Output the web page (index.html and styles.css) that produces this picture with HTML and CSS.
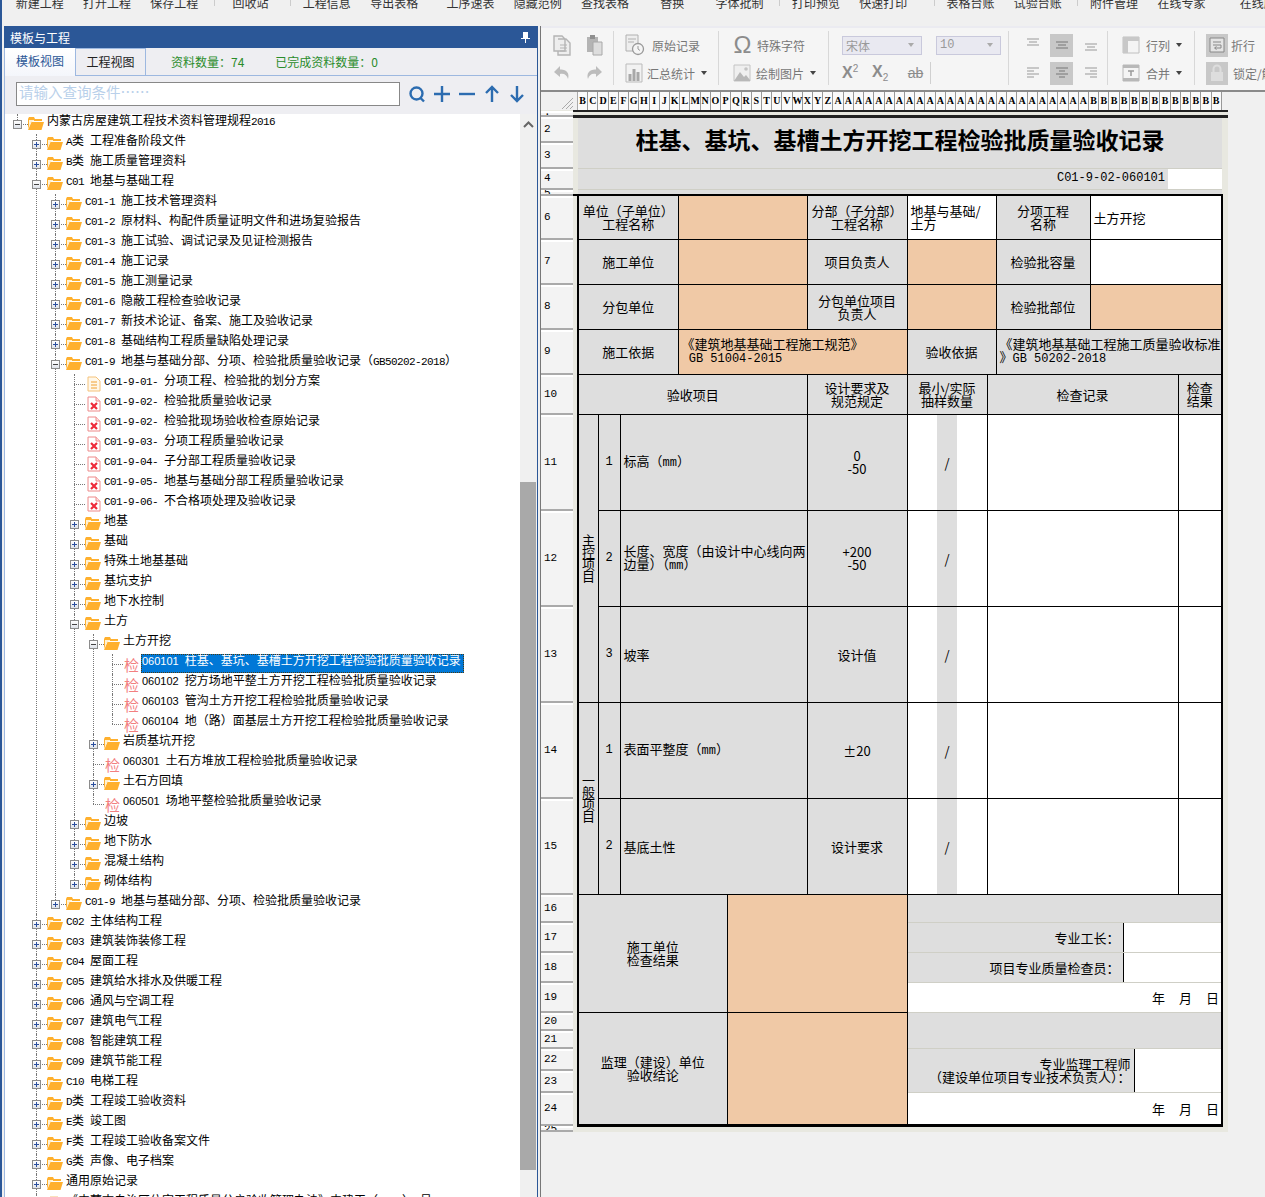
FILE: index.html
```html
<!DOCTYPE html>
<html lang="zh-CN">
<head>
  <meta charset="UTF-8" />
  <title>检验批质量验收记录</title>
  <link rel="stylesheet" href="styles.css">
</head>
<body>
  <svg class="defs" width="0" height="0">
    <symbol id="folder" viewBox="0 0 16 13">
      <path d="M0 2 L1 0 H6 L7 2 H14 V4 H4 L2 6 L0 12 Z" fill="#ffb02e"/>
      <path d="M1 3 H6 V4 L3 5 L1 9 Z" fill="#fff3d6"/>
      <path d="M3.5 5 H16 L13.5 13 H0 Z" fill="#ffb02e"/>
    </symbol>
    <symbol id="note" viewBox="0 0 14 16">
      <path d="M1 1 H9 L13 5 V15 H1 Z" fill="#fff8ea" stroke="#f5c27a"/>
      <path d="M4 6 H10 M4 9 H10 M4 12 H10" stroke="#f0a030"/>
    </symbol>
    <symbol id="pdf" viewBox="0 0 14 16">
      <path d="M1 1 H9 L13 5 V15 H1 Z" fill="#fff" stroke="#ee8a8a"/>
      <path d="M9 1 V5 H13" fill="#fdd" stroke="#ee8a8a"/>
      <path d="M4 7 L10 13 M10 7 L4 13" stroke="#ee2a3a" stroke-width="2.2"/>
    </symbol>
    <symbol id="lines-top" viewBox="0 0 16 16"><path d="M2 2 H14 M4 5 H12 M2 8 H14" stroke="#999"/></symbol>
    <symbol id="lines-mid" viewBox="0 0 16 16"><path d="M2 5 H14 M4 8 H12 M2 11 H14" stroke="#777"/></symbol>
    <symbol id="lines-bot" viewBox="0 0 16 16"><path d="M2 7 H14 M4 10 H12 M2 13 H14" stroke="#999"/></symbol>
    <symbol id="lines-left" viewBox="0 0 16 16"><path d="M2 3 H14 M2 6 H9 M2 9 H14 M2 12 H9" stroke="#999"/></symbol>
    <symbol id="lines-center" viewBox="0 0 16 16"><path d="M2 3 H14 M5 6 H11 M2 9 H14 M5 12 H11" stroke="#777"/></symbol>
    <symbol id="lines-right" viewBox="0 0 16 16"><path d="M2 3 H14 M7 6 H14 M2 9 H14 M7 12 H14" stroke="#999"/></symbol>
  </svg>

  <div class="topbar">
    <span class="tool">新建工程</span>
    <span class="tool">打开工程</span>
    <span class="tool">保存工程</span>
    <i class="tsep"></i>
    <span class="tool">回收站</span>
    <i class="tsep"></i>
    <span class="tool">工程信息</span>
    <span class="tool">导出表格</span>
    <span class="tool gap">工序速表</span>
    <span class="tool">隐藏范例</span>
    <span class="tool">查找表格</span>
    <span class="tool">替换</span>
    <span class="tool">字体批制</span>
    <i class="tsep"></i>
    <span class="tool">打印预览</span>
    <span class="tool">快速打印</span>
    <i class="tsep far"></i>
    <span class="tool">表格台账</span>
    <span class="tool">试验台账</span>
    <i class="tsep"></i>
    <span class="tool">附件管理</span>
    <span class="tool">在线专家</span>
    <span class="tool gap2">在线服务</span>
  </div>

  <div class="app">
    <!-- left: template tree -->
    <div class="panel">
      <div class="panel-title">
        <span>模板与工程</span>
        <svg class="pin" width="9" height="11" viewBox="0 0 9 11"><path d="M2 0 H7 V6 H9 V7 H5 V11 H4 V7 H0 V6 H2 Z" fill="#fff"/></svg>
      </div>
      <div class="tabs">
        <span class="tab active">模板视图</span>
        <span class="tab">工程视图</span>
        <span class="count first">资料数量：74</span>
        <span class="count">已完成资料数量：0</span>
      </div>
      <div class="search">
        <div class="search-input">请输入查询条件……</div>
        <svg class="s-icon" width="18" height="18" viewBox="0 0 18 18"><circle cx="8.5" cy="8.5" r="6" fill="none" stroke="#2c6cb0" stroke-width="2.4"/><path d="M12.5 13 L16 16.5" stroke="#2c6cb0" stroke-width="2.4"/></svg>
        <svg class="s-icon" width="18" height="18" viewBox="0 0 18 18"><path d="M1 9 H17 M9 1 V17" stroke="#2c6cb0" stroke-width="2.4"/></svg>
        <svg class="s-icon" width="18" height="18" viewBox="0 0 18 18"><path d="M1 9 H17" stroke="#2c6cb0" stroke-width="2.4"/></svg>
        <svg class="s-icon" width="18" height="18" viewBox="0 0 18 18"><path d="M9 17 V2 M3 8 L9 2 L15 8" fill="none" stroke="#2c6cb0" stroke-width="2.4"/></svg>
        <svg class="s-icon" width="18" height="18" viewBox="0 0 18 18"><path d="M9 1 V16 M3 10 L9 16 L15 10" fill="none" stroke="#2c6cb0" stroke-width="2.4"/></svg>
      </div>
      <div class="tree-wrap">
        <div class="tree">
          <ul>
            <li><div class="row"><i class="x m"></i><svg class="ico"><use href="#folder"/></svg><span class="lbl">内蒙古房屋建筑工程技术资料管理规程<span class="c">2016</span></span></div>
              <ul>
                <li><div class="row"><i class="x"></i><svg class="ico"><use href="#folder"/></svg><span class="lbl"><span class="c">A</span>类<span class="c"> </span>工程准备阶段文件</span></div></li>
                <li><div class="row"><i class="x"></i><svg class="ico"><use href="#folder"/></svg><span class="lbl"><span class="c">B</span>类<span class="c"> </span>施工质量管理资料</span></div></li>
                <li><div class="row"><i class="x m"></i><svg class="ico"><use href="#folder"/></svg><span class="lbl"><span class="c">C01 </span>地基与基础工程</span></div>
                  <ul>
                    <li><div class="row"><i class="x"></i><svg class="ico"><use href="#folder"/></svg><span class="lbl"><span class="c">C01-1 </span>施工技术管理资料</span></div></li>
                    <li><div class="row"><i class="x"></i><svg class="ico"><use href="#folder"/></svg><span class="lbl"><span class="c">C01-2 </span>原材料、构配件质量证明文件和进场复验报告</span></div></li>
                    <li><div class="row"><i class="x"></i><svg class="ico"><use href="#folder"/></svg><span class="lbl"><span class="c">C01-3 </span>施工试验、调试记录及见证检测报告</span></div></li>
                    <li><div class="row"><i class="x"></i><svg class="ico"><use href="#folder"/></svg><span class="lbl"><span class="c">C01-4 </span>施工记录</span></div></li>
                    <li><div class="row"><i class="x"></i><svg class="ico"><use href="#folder"/></svg><span class="lbl"><span class="c">C01-5 </span>施工测量记录</span></div></li>
                    <li><div class="row"><i class="x"></i><svg class="ico"><use href="#folder"/></svg><span class="lbl"><span class="c">C01-6 </span>隐蔽工程检查验收记录</span></div></li>
                    <li><div class="row"><i class="x"></i><svg class="ico"><use href="#folder"/></svg><span class="lbl"><span class="c">C01-7 </span>新技术论证、备案、施工及验收记录</span></div></li>
                    <li><div class="row"><i class="x"></i><svg class="ico"><use href="#folder"/></svg><span class="lbl"><span class="c">C01-8 </span>基础结构工程质量缺陷处理记录</span></div></li>
                    <li><div class="row"><i class="x m"></i><svg class="ico"><use href="#folder"/></svg><span class="lbl"><span class="c">C01-9 </span>地基与基础分部、分项、检验批质量验收记录（<span class="c">GB50202-2018</span>）</span></div>
                      <ul>
                        <li><div class="row"><i class="x none"></i><svg class="ico doc"><use href="#note"/></svg><span class="lbl"><span class="c">C01-9-01- </span>分项工程、检验批的划分方案</span></div></li>
                        <li><div class="row"><i class="x none"></i><svg class="ico doc"><use href="#pdf"/></svg><span class="lbl"><span class="c">C01-9-02- </span>检验批质量验收记录</span></div></li>
                        <li><div class="row"><i class="x none"></i><svg class="ico doc"><use href="#pdf"/></svg><span class="lbl"><span class="c">C01-9-02- </span>检验批现场验收检查原始记录</span></div></li>
                        <li><div class="row"><i class="x none"></i><svg class="ico doc"><use href="#pdf"/></svg><span class="lbl"><span class="c">C01-9-03- </span>分项工程质量验收记录</span></div></li>
                        <li><div class="row"><i class="x none"></i><svg class="ico doc"><use href="#pdf"/></svg><span class="lbl"><span class="c">C01-9-04- </span>子分部工程质量验收记录</span></div></li>
                        <li><div class="row"><i class="x none"></i><svg class="ico doc"><use href="#pdf"/></svg><span class="lbl"><span class="c">C01-9-05- </span>地基与基础分部工程质量验收记录</span></div></li>
                        <li><div class="row"><i class="x none"></i><svg class="ico doc"><use href="#pdf"/></svg><span class="lbl"><span class="c">C01-9-06- </span>不合格项处理及验收记录</span></div></li>
                        <li><div class="row"><i class="x"></i><svg class="ico"><use href="#folder"/></svg><span class="lbl">地基</span></div></li>
                        <li><div class="row"><i class="x"></i><svg class="ico"><use href="#folder"/></svg><span class="lbl">基础</span></div></li>
                        <li><div class="row"><i class="x"></i><svg class="ico"><use href="#folder"/></svg><span class="lbl">特殊土地基基础</span></div></li>
                        <li><div class="row"><i class="x"></i><svg class="ico"><use href="#folder"/></svg><span class="lbl">基坑支护</span></div></li>
                        <li><div class="row"><i class="x"></i><svg class="ico"><use href="#folder"/></svg><span class="lbl">地下水控制</span></div></li>
                        <li><div class="row"><i class="x m"></i><svg class="ico"><use href="#folder"/></svg><span class="lbl">土方</span></div>
                          <ul>
                            <li><div class="row"><i class="x m"></i><svg class="ico"><use href="#folder"/></svg><span class="lbl">土方开挖</span></div>
                              <ul>
                                <li><div class="row"><i class="x none"></i><span class="jian">检</span><span class="lbl sel"><span class="n">060101</span>柱基、基坑、基槽土方开挖工程检验批质量验收记录</span></div></li>
                                <li><div class="row"><i class="x none"></i><span class="jian">检</span><span class="lbl"><span class="n">060102</span>挖方场地平整土方开挖工程检验批质量验收记录</span></div></li>
                                <li><div class="row"><i class="x none"></i><span class="jian">检</span><span class="lbl"><span class="n">060103</span>管沟土方开挖工程检验批质量验收记录</span></div></li>
                                <li><div class="row"><i class="x none"></i><span class="jian">检</span><span class="lbl"><span class="n">060104</span>地（路）面基层土方开挖工程检验批质量验收记录</span></div></li>
                              </ul>
                            </li>
                            <li><div class="row"><i class="x"></i><svg class="ico"><use href="#folder"/></svg><span class="lbl">岩质基坑开挖</span></div></li>
                            <li><div class="row"><i class="x none"></i><span class="jian">检</span><span class="lbl"><span class="n">060301</span>土石方堆放工程检验批质量验收记录</span></div></li>
                            <li><div class="row"><i class="x"></i><svg class="ico"><use href="#folder"/></svg><span class="lbl">土石方回填</span></div></li>
                            <li><div class="row"><i class="x none"></i><span class="jian">检</span><span class="lbl"><span class="n">060501</span>场地平整检验批质量验收记录</span></div></li>
                          </ul>
                        </li>
                        <li><div class="row"><i class="x"></i><svg class="ico"><use href="#folder"/></svg><span class="lbl">边坡</span></div></li>
                        <li><div class="row"><i class="x"></i><svg class="ico"><use href="#folder"/></svg><span class="lbl">地下防水</span></div></li>
                        <li><div class="row"><i class="x"></i><svg class="ico"><use href="#folder"/></svg><span class="lbl">混凝土结构</span></div></li>
                        <li><div class="row"><i class="x"></i><svg class="ico"><use href="#folder"/></svg><span class="lbl">砌体结构</span></div></li>
                      </ul>
                    </li>
                    <li><div class="row"><i class="x"></i><svg class="ico"><use href="#folder"/></svg><span class="lbl"><span class="c">C01-9 </span>地基与基础分部、分项、检验批质量验收记录</span></div></li>
                  </ul>
                </li>
                <li><div class="row"><i class="x"></i><svg class="ico"><use href="#folder"/></svg><span class="lbl"><span class="c">C02 </span>主体结构工程</span></div></li>
                <li><div class="row"><i class="x"></i><svg class="ico"><use href="#folder"/></svg><span class="lbl"><span class="c">C03 </span>建筑装饰装修工程</span></div></li>
                <li><div class="row"><i class="x"></i><svg class="ico"><use href="#folder"/></svg><span class="lbl"><span class="c">C04 </span>屋面工程</span></div></li>
                <li><div class="row"><i class="x"></i><svg class="ico"><use href="#folder"/></svg><span class="lbl"><span class="c">C05 </span>建筑给水排水及供暖工程</span></div></li>
                <li><div class="row"><i class="x"></i><svg class="ico"><use href="#folder"/></svg><span class="lbl"><span class="c">C06 </span>通风与空调工程</span></div></li>
                <li><div class="row"><i class="x"></i><svg class="ico"><use href="#folder"/></svg><span class="lbl"><span class="c">C07 </span>建筑电气工程</span></div></li>
                <li><div class="row"><i class="x"></i><svg class="ico"><use href="#folder"/></svg><span class="lbl"><span class="c">C08 </span>智能建筑工程</span></div></li>
                <li><div class="row"><i class="x"></i><svg class="ico"><use href="#folder"/></svg><span class="lbl"><span class="c">C09 </span>建筑节能工程</span></div></li>
                <li><div class="row"><i class="x"></i><svg class="ico"><use href="#folder"/></svg><span class="lbl"><span class="c">C10 </span>电梯工程</span></div></li>
                <li><div class="row"><i class="x"></i><svg class="ico"><use href="#folder"/></svg><span class="lbl"><span class="c">D</span>类<span class="c"> </span>工程竣工验收资料</span></div></li>
                <li><div class="row"><i class="x"></i><svg class="ico"><use href="#folder"/></svg><span class="lbl"><span class="c">E</span>类<span class="c"> </span>竣工图</span></div></li>
                <li><div class="row"><i class="x"></i><svg class="ico"><use href="#folder"/></svg><span class="lbl"><span class="c">F</span>类<span class="c"> </span>工程竣工验收备案文件</span></div></li>
                <li><div class="row"><i class="x"></i><svg class="ico"><use href="#folder"/></svg><span class="lbl"><span class="c">G</span>类<span class="c"> </span>声像、电子档案</span></div></li>
                <li><div class="row"><i class="x"></i><svg class="ico"><use href="#folder"/></svg><span class="lbl">通用原始记录</span></div></li>
                <li><div class="row"><i class="x none"></i><svg class="ico doc"><use href="#note"/></svg><span class="lbl">《内蒙古自治区住宅工程质量分户验收管理办法》内建工（<span class="c">2012</span>）<span class="c">1</span>号</span></div></li>
              </ul>
            </li>
          </ul>
        </div>
        <div class="scrollbar">
          <svg class="chev" width="11" height="7" viewBox="0 0 11 7"><path d="M1 6 L5.5 1.5 L10 6" fill="none" stroke="#666" stroke-width="2"/></svg>
          <div class="thumb"></div>
        </div>
      </div>
    </div>

    <!-- right: ribbon and sheet -->
    <div class="work">
      <div class="ribbon">
        <div class="grp g1">
          <div class="rrow">
            <svg width="20" height="22" viewBox="0 0 20 22"><path d="M2 2 H10 L13 5 V17 H2 Z M6 5 H14 L18 9 V21 H6 V17" fill="#eee" stroke="#b4b4b4" stroke-width="1.4"/><path d="M8 11 H15 M8 14 H15 M8 17 H15" stroke="#b4b4b4"/></svg>
            <svg width="20" height="22" viewBox="0 0 20 22"><path d="M3 3 H14 V18 H3 Z" fill="#b4b4b4"/><path d="M6 1 H11 V5 H6 Z" fill="#8f8f8f"/><path d="M9 8 H18 V21 H9 Z" fill="#ddd" stroke="#a8a8a8"/></svg>
          </div>
          <div class="rrow">
            <svg width="20" height="18" viewBox="0 0 20 18"><path d="M8 2 L2 8 L8 13 V10 C12 9 15 11 16 15 C18 9 14 5 8 5.500 Z" fill="#bcbcbc"/></svg>
            <svg width="20" height="18" viewBox="0 0 20 18"><path d="M12 2 L18 8 L12 13 V10 C8 9 5 11 4 15 C2 9 6 5 12 5.500 Z" fill="#bcbcbc"/></svg>
          </div>
        </div>
        <div class="grp g2">
          <div class="rrow">
            <svg width="20" height="22" viewBox="0 0 20 22"><path d="M1 1 H13 V17 H1 Z" fill="#eee" stroke="#b0b0b0"/><path d="M3 5 H11 M3 8 H9" stroke="#b0b0b0"/><circle cx="13" cy="15" r="5.500" fill="#f5f5f5" stroke="#999" stroke-width="1.300"/><path d="M13 12 V15 L15 16.500" fill="none" stroke="#999"/></svg>
            <span class="rtext t2a">原始记录</span>
          </div>
          <div class="rrow">
            <svg width="18" height="20" viewBox="0 0 18 20"><path d="M1 1 H17 V19 H1 Z" fill="#f2f2f2" stroke="#bbb"/><path d="M5 11 V18 M9 6 V18 M13 9 V18" stroke="#a8a8a8" stroke-width="3"/></svg>
            <span class="rtext t2b">汇总统计</span><i class="caret"></i>
          </div>
        </div>
        <div class="grp g3">
          <div class="rrow">
            <span class="omega">Ω</span>
            <span class="rtext t3a">特殊字符</span>
          </div>
          <div class="rrow">
            <svg width="18" height="18" viewBox="0 0 18 18"><path d="M1 1 H17 V17 H1 Z" fill="#efefef" stroke="#c4c4c4"/><path d="M1 17 L7 8 L11 13 L13 11 L17 16 V17 Z" fill="#b8b8b8"/><circle cx="13" cy="5" r="1.800" fill="#c4c4c4"/></svg>
            <span class="rtext t3b">绘制图片</span><i class="caret"></i>
          </div>
        </div>
        <div class="grp g4">
          <div class="rrow">
            <div class="select wide"><span>宋体</span><i class="caret lite"></i></div>
            <div class="select"><span class="num">10</span><i class="caret lite"></i></div>
          </div>
          <div class="rrow">
            <span class="script">X<sup>2</sup></span>
            <span class="script">X<sub>2</sub></span>
            <span class="strike">ab</span>
            <i class="vsep"></i>
          </div>
        </div>
        <div class="grp g5">
          <div class="rrow">
            <span class="al"><svg width="16" height="16"><use href="#lines-top"/></svg></span>
            <span class="al on"><svg width="16" height="16"><use href="#lines-mid"/></svg></span>
            <span class="al"><svg width="16" height="16"><use href="#lines-bot"/></svg></span>
          </div>
          <div class="rrow">
            <span class="al"><svg width="16" height="16"><use href="#lines-left"/></svg></span>
            <span class="al on"><svg width="16" height="16"><use href="#lines-center"/></svg></span>
            <span class="al"><svg width="16" height="16"><use href="#lines-right"/></svg></span>
          </div>
        </div>
        <div class="grp g6">
          <div class="rrow">
            <svg width="18" height="18" viewBox="0 0 18 18"><path d="M1 1 H17 V17 H1 Z" fill="#f4f4f4" stroke="#c0c0c0"/><path d="M1 1 H17 V5 H1 Z M1 5 H6 V17 H1 Z" fill="#c8c8c8"/></svg>
            <span class="rtext t6">行列</span><i class="caret"></i>
          </div>
          <div class="rrow">
            <svg width="18" height="18" viewBox="0 0 18 18"><path d="M1 1 H17 V17 H1 Z" fill="#f4f4f4" stroke="#b8b8b8"/><path d="M1 1 H17 V4 H1 Z M1 14 H17 V17 H1 Z" fill="#b8b8b8"/><path d="M6 7 H12 M9 7 V12" stroke="#999" stroke-width="1.500"/></svg>
            <span class="rtext t6">合并</span><i class="caret"></i>
          </div>
        </div>
        <div class="grp g7">
          <div class="rrow">
            <span class="boxed"><svg width="16" height="16" viewBox="0 0 16 16"><path d="M1 1 H15 V15 H1 Z" fill="#e4e4e4" stroke="#888"/><path d="M4 5 H12 M4 8 H12 V11 H6 M7.500 9.500 L5.500 11 L7.500 12.500" fill="none" stroke="#888"/></svg></span>
            <span class="rtext t7">折行</span>
          </div>
          <div class="rrow">
            <span class="boxed"><svg width="14" height="18" viewBox="0 0 14 18"><path d="M1 8 H13 V17 H1 Z" fill="#ddd"/><path d="M3.500 8 V5 A3.500 3.500 0 0 1 10.500 5 V8" fill="none" stroke="#ddd" stroke-width="2"/></svg></span>
            <span class="rtext t7b">锁定/解锁</span>
          </div>
        </div>
      </div>

      <div class="sheet-wrap">
        <div class="colhead">
          <div class="corner"><svg width="14" height="14" viewBox="0 0 14 14"><path d="M13 2 L2 13 M13 6 L6 13 M13 10 L10 13" stroke="#aaa"/></svg></div>
          <span>B</span><span>C</span><span>D</span><span>E</span><span>F</span><span>G</span><span>H</span><span>I</span><span>J</span><span>K</span><span>L</span><span>M</span><span>N</span><span>O</span><span>P</span><span>Q</span><span>R</span><span>S</span><span>T</span><span>U</span><span>V</span><span>W</span><span>X</span><span>Y</span><span>Z</span>
          <span>A</span><span>A</span><span>A</span><span>A</span><span>A</span><span>A</span><span>A</span><span>A</span><span>A</span><span>A</span><span>A</span><span>A</span><span>A</span><span>A</span><span>A</span><span>A</span><span>A</span><span>A</span><span>A</span><span>A</span><span>A</span><span>A</span><span>A</span><span>A</span><span>A</span>
          <span>B</span><span>B</span><span>B</span><span>B</span><span>B</span><span>B</span><span>B</span><span>B</span><span>B</span><span>B</span><span>B</span><span>B</span><span>B</span>
        </div>
        <table class="sheet">
          <colgroup>
            <col class="w32"><col class="w5">
            <col class="w20"><col class="w22"><col class="w58"><col class="w49"><col class="w80"><col class="w100">
            <col class="w30"><col class="w20"><col class="w30"><col class="w9"><col class="w94"><col class="w33">
            <col class="w11"><col class="w34"><col class="w10"><col class="w44"><col class="w6">
          </colgroup>
          <tbody class="head">
            <tr class="h5"><th class="rh"><span class="clip">·</span></th><td class="rule" colspan="18"></td></tr>
            <tr class="h26"><th class="rh">2</th><td class="band"></td><td class="g title" colspan="16" rowspan="2">柱基、基坑、基槽土方开挖工程检验批质量验收记录</td></tr>
            <tr class="h26"><th class="rh">3</th><td class="band"></td></tr>
            <tr class="h21"><th class="rh">4</th><td class="band"></td><td class="g right code" colspan="14">C01-9-02-060101</td><td class="w" colspan="2"></td></tr>
            <tr class="h5"><th class="rh"><span class="clip">5</span></th><td class="band"></td><td class="g" colspan="16"></td></tr>
          </tbody>
          <tbody class="form">
            <tr class="h44"><th class="rh">6</th><td class="band"></td>
              <td class="g" colspan="3">单位（子单位）<br>工程名称</td><td class="o" colspan="2"></td>
              <td class="g">分部（子分部）<br>工程名称</td><td class="w left" colspan="4">地基与基础/<br>土方</td>
              <td class="g">分项工程<br>名称</td><td class="w left" colspan="5">土方开挖</td></tr>
            <tr class="h45"><th class="rh">7</th><td class="band"></td>
              <td class="g" colspan="3">施工单位</td><td class="o" colspan="2"></td>
              <td class="g">项目负责人</td><td class="o" colspan="4"></td>
              <td class="g">检验批容量</td><td class="w" colspan="5"></td></tr>
            <tr class="h45"><th class="rh">8</th><td class="band"></td>
              <td class="g" colspan="3">分包单位</td><td class="o" colspan="2"></td>
              <td class="g">分包单位项目<br>负责人</td><td class="o" colspan="4"></td>
              <td class="g">检验批部位</td><td class="o" colspan="5"></td></tr>
            <tr class="h45"><th class="rh">9</th><td class="band"></td>
              <td class="g" colspan="3">施工依据</td>
              <td class="o left" colspan="3">《建筑地基基础工程施工规范》<br><span class="code">&nbsp;GB 51004-2015</span></td>
              <td class="g" colspan="4">验收依据</td>
              <td class="g left nowrap" colspan="6">《建筑地基基础工程施工质量验收标准<br>》<span class="code">GB 50202-2018</span></td></tr>
            <tr class="h40"><th class="rh">10</th><td class="band"></td>
              <td class="g" colspan="5">验收项目</td><td class="g">设计要求及<br>规范规定</td>
              <td class="g" colspan="3">最小/实际<br>抽样数量</td><td class="g" colspan="6">检查记录</td><td class="g">检查<br>结果</td></tr>
            <tr class="h96"><th class="rh">11</th><td class="band"></td>
              <td class="g vert" rowspan="3">主控项目</td><td class="g code">1</td><td class="g left" colspan="3">标高（<span class="code">mm</span>）</td>
              <td class="g">0<br>-50</td><td class="w cell-n"></td><td class="g slash">/</td><td class="w cell-n"></td><td class="w" colspan="6"></td><td class="w"></td></tr>
            <tr class="h96"><th class="rh">12</th><td class="band"></td>
              <td class="g code">2</td><td class="g left nowrap" colspan="3">长度、宽度（由设计中心线向两<br>边量）（<span class="code">mm</span>）</td>
              <td class="g">+200<br>-50</td><td class="w cell-n"></td><td class="g slash">/</td><td class="w cell-n"></td><td class="w" colspan="6"></td><td class="w"></td></tr>
            <tr class="h96"><th class="rh">13</th><td class="band"></td>
              <td class="g code">3</td><td class="g left" colspan="3">坡率</td>
              <td class="g">设计值</td><td class="w cell-n"></td><td class="g slash">/</td><td class="w cell-n"></td><td class="w" colspan="6"></td><td class="w"></td></tr>
            <tr class="h96"><th class="rh">14</th><td class="band"></td>
              <td class="g vert" rowspan="2">一般项目</td><td class="g code">1</td><td class="g left" colspan="3">表面平整度（<span class="code">mm</span>）</td>
              <td class="g">±20</td><td class="w cell-n"></td><td class="g slash">/</td><td class="w cell-n"></td><td class="w" colspan="6"></td><td class="w"></td></tr>
            <tr class="h96"><th class="rh">15</th><td class="band"></td>
              <td class="g code">2</td><td class="g left" colspan="3">基底土性</td>
              <td class="g">设计要求</td><td class="w cell-n"></td><td class="g slash">/</td><td class="w cell-n"></td><td class="w" colspan="6"></td><td class="w"></td></tr>
            <tr class="h28"><th class="rh">16</th><td class="band"></td>
              <td class="g" colspan="4" rowspan="4">施工单位<br>检查结果</td><td class="o" colspan="2" rowspan="4"></td>
              <td class="g lt" colspan="10"></td></tr>
            <tr class="h30"><th class="rh">17</th><td class="band"></td>
              <td class="g lt right" colspan="6">专业工长：</td><td class="w lt" colspan="4"></td></tr>
            <tr class="h30"><th class="rh">18</th><td class="band"></td>
              <td class="g lt right" colspan="6">项目专业质量检查员：</td><td class="w lt" colspan="4"></td></tr>
            <tr class="h30"><th class="rh">19</th><td class="band"></td>
              <td class="w lt right date" colspan="10">年<b></b>月<b></b>日</td></tr>
            <tr class="h18"><th class="rh">20</th><td class="band"></td>
              <td class="g btm" colspan="4" rowspan="5">监理（建设）单位<br>验收结论</td><td class="o btm" colspan="2" rowspan="5"></td>
              <td class="g lt" colspan="10" rowspan="2"></td></tr>
            <tr class="h18"><th class="rh">21</th><td class="band"></td></tr>
            <tr class="h22"><th class="rh">22</th><td class="band"></td>
              <td class="g lt right nowrap" colspan="7" rowspan="2">专业监理工程师<br>（建设单位项目专业技术负责人）：</td><td class="w lt" colspan="3" rowspan="2"></td></tr>
            <tr class="h22"><th class="rh">23</th><td class="band"></td></tr>
            <tr class="h33"><th class="rh">24</th><td class="band"></td>
              <td class="w lt right date btm" colspan="10">年<b></b>月<b></b>日</td></tr>
          </tbody>
          <tbody>
            <tr class="h5"><th class="rh"><span class="clip">25</span></th><td class="band"></td><td class="band" colspan="16"></td></tr>
          </tbody>
        </table>
      </div>
    </div>
  </div>
</body>
</html>
```

FILE: styles.css
```css
* {
  box-sizing: border-box;
}
html, body {
  margin: 0;
  height: 1197px;
  overflow: hidden;
}
body {
  background: #f0f0f0;
  border-left: 2px solid #2b5797;
  font-family: "Noto Sans CJK SC", "Liberation Sans", sans-serif;
  font-size: 12px;
  color: #000;
}
.defs {
  position: absolute;
}

/* top toolbar, cut off by the window edge */
.topbar {
  display: flex;
  height: 26px;
  padding-left: 4px;
  overflow: hidden;
  color: #333;
}
.tool {
  flex: none;
  width: 67.3px;
  margin-top: -4px;
  line-height: 14px;
  height: 14px;
  text-align: center;
}
.tool.gap { margin-left: 9px; }
.tool.gap2 { margin-left: 15px; }
.tsep {
  flex: none;
  width: 1px;
  height: 6px;
  margin: 0 2px 0 6px;
  background: #ccc;
}
.tsep.far { margin-left: 17px; }

.app {
  display: flex;
  height: 1171px;
}

/* left panel */
.panel {
  flex: none;
  width: 534px;
  margin-left: 2px;
  display: flex;
  flex-direction: column;
  border-right: 1px solid #2b5797;
}
.panel-title {
  height: 22px;
  flex: none;
  background: #2b5797;
  color: #fff;
  display: flex;
  align-items: center;
  justify-content: space-between;
  padding: 0 7px 0 6px;
}
.tabs {
  height: 28px;
  flex: none;
  display: flex;
  align-items: center;
  background: #eeeef2;
  border-left: 1px solid #9db8e0;
  border-bottom: 1px solid #9db8e0;
}
.tab {
  align-self: stretch;
  width: 70px;
  line-height: 26px;
  text-align: center;
  border: 1px solid #9db8e0;
  border-width: 1px 1px 0 0;
  color: #222;
}
.tab.active {
  width: 71px;
  color: #2b5797;
  background: linear-gradient(#fff, #f4f6fb);
  margin-bottom: -1px;
  border-top: none;
}
.count {
  color: #2a8c2a;
  margin-left: 31px;
}
.count.first { margin-left: 25px; }
.search {
  height: 38px;
  flex: none;
  background: #eeeef2;
  border-left: 1px solid #9db8e0;
  display: flex;
  align-items: center;
  padding: 0 0 2px 11px;
}
.search-input {
  flex: none;
  width: 384px;
  height: 24px;
  background: #fff;
  border: 1px solid #888;
  color: #b9d0ea;
  font-size: 14.5px;
  line-height: 18px;
  padding-left: 2px;
  margin-right: 8px;
}
.s-icon {
  flex: none;
  margin-right: 7px;
}

/* tree */
.tree-wrap {
  flex: 1;
  min-height: 0;
  display: flex;
  border-left: 1px solid #9db8e0;
}
.tree {
  flex: 1;
  min-width: 0;
  background: #fff;
  overflow: hidden;
}
.tree ul {
  list-style: none;
  margin: 0 0 0 19px;
  padding: 0;
}
.tree > ul {
  margin-left: 12px;
}
.tree li {
  position: relative;
}
.tree li::before {
  content: "";
  position: absolute;
  left: 0;
  top: 0;
  bottom: 0;
  border-left: 1px dotted #777;
}
.tree li:last-child::before {
  bottom: auto;
  height: 10px;
}
.tree li::after {
  content: "";
  position: absolute;
  left: 0;
  top: 10px;
  width: 11px;
  border-top: 1px dotted #777;
}
.row {
  position: relative;
  z-index: 1;
  display: flex;
  align-items: flex-start;
  height: 20px;
  margin-left: -4px;
  white-space: nowrap;
}
.x {
  flex: none;
  position: relative;
  width: 9px;
  height: 9px;
  margin-top: 6px;
  border: 1px solid #8c8c8c;
  background: linear-gradient(#fff, #dfe3ea);
}
.x::before, .x::after {
  content: "";
  position: absolute;
  background: #2b4f9e;
}
.x::before {
  left: 1px;
  top: 3px;
  width: 5px;
  height: 1px;
}
.x::after {
  left: 3px;
  top: 1px;
  width: 1px;
  height: 5px;
}
.x.m::before { background: #444; }
.x.m::after { display: none; }
.x.none {
  border: none;
  background: none;
}
.x.none::before, .x.none::after { display: none; }
.ico {
  flex: none;
  width: 16px;
  height: 13px;
  margin: 3px 0 0 6px;
}
.ico.doc {
  width: 14px;
  height: 16px;
  margin: 2px 0 0 8px;
}
.jian {
  flex: none;
  width: 15px;
  margin: 3px 0 0 7px;
  color: #f26a6a;
  font-size: 15px;
  line-height: 16px;
  opacity: .85;
}
.lbl {
  margin-left: 3px;
  line-height: 11px;
  height: 13px;
}
.c {
  font-family: "Liberation Mono", monospace;
  font-size: 11px;
  letter-spacing: -.6px;
  white-space: pre;
}
.n {
  font-family: "Liberation Sans", sans-serif;
  font-size: 11px;
  margin-right: 6px;
}
.sel {
  height: 19px;
  margin-left: 2px;
  padding: 0 3px 0 1px;
  background: #0078d7;
  color: #fff;
  outline: 1px dotted #4a3a10;
  outline-offset: -1px;
}
.scrollbar {
  flex: none;
  width: 16px;
  background: #f0f0f0;
  margin-right: 1px;
}
.chev {
  display: block;
  margin: 7px auto 0;
}
.thumb {
  height: 688px;
  margin-top: 354px;
  background: #a9a9a9;
}

/* ribbon */
.work {
  flex: 1;
  min-width: 0;
  margin-left: 2px;
  border-left: 1px solid #777;
  overflow: hidden;
}
.ribbon {
  display: flex;
  height: 66px;
  padding: 3px 0 0;
  background: #f5f5f5;
  border-top: 2px solid #ebebf1;
  border-bottom: 2px solid #8a8a8a;
  color: #777;
  white-space: nowrap;
}
.grp {
  flex: none;
  height: 54px;
  border-right: 1px solid #d8d8d8;
}
.g1 { width: 73px; }
.g2 { width: 105px; }
.g3 { width: 110px; }
.g4 { width: 180px; }
.g5 { width: 99px; }
.g6 { width: 87px; }
.g7 { width: 70px; border-right: none; }
.rrow {
  display: flex;
  align-items: center;
  height: 28px;
}
.g1 .rrow { padding-left: 11px; gap: 12px; }
.g2 .rrow { padding-left: 11px; }
.g3 .rrow { padding-left: 14px; }
.g4 .rrow { padding-left: 13px; }
.g5 .rrow { padding-left: 12px; gap: 6px; }
.g6 .rrow { padding-left: 14px; }
.g7 .rrow { padding-left: 11px; }
.t2a { margin-left: 7px; }
.t2b { margin-left: 4px; }
.t3a { margin-left: 5px; }
.t3b { margin-left: 5px; }
.t6 { margin-left: 6px; }
.t7 { margin-left: 3px; }
.t7b { margin-left: 5px; }
.caret {
  width: 0;
  height: 0;
  margin-left: 6px;
  border: 3px solid transparent;
  border-top: 4px solid #444;
  border-bottom: 0;
}
.caret.lite {
  border-top-color: #aaa;
  margin-left: auto;
}
.omega {
  font-family: "Liberation Sans", sans-serif;
  font-size: 24px;
  line-height: 24px;
  width: 19px;
  text-align: center;
  color: #8c8c8c;
}
.select {
  display: flex;
  align-items: center;
  width: 65px;
  height: 19px;
  padding: 0 7px 0 3px;
  background: #e9e9f1;
  border: 1px solid #c9c9dc;
  color: #999;
}
.select.wide {
  width: 80px;
  margin-right: 14px;
}
.num {
  font-family: "Liberation Mono", monospace;
}
.script {
  width: 30px;
  font-family: "Liberation Sans", sans-serif;
  font-size: 16px;
  font-weight: bold;
  color: #8c8c8c;
}
.script sup, .script sub {
  font-size: 10px;
  font-weight: normal;
}
.strike {
  width: 27px;
  font-family: "Liberation Sans", sans-serif;
  font-size: 14px;
  color: #8c8c8c;
  text-decoration: line-through;
  text-align: center;
}
.vsep {
  width: 1px;
  height: 22px;
  margin-left: 1px;
  background: #d0d0d0;
}
.al {
  display: flex;
  align-items: center;
  justify-content: center;
  width: 23px;
  height: 23px;
}
.al.on { background: #c8c8c8; }
.boxed {
  flex: none;
  display: flex;
  align-items: center;
  justify-content: center;
  width: 22px;
  height: 23px;
  background: #c8c8c8;
}

/* sheet */
.sheet-wrap {
  width: 687px;
}
.colhead {
  display: flex;
  height: 18px;
  width: 681px;
}
.corner {
  flex: none;
  width: 37px;
  display: flex;
  align-items: flex-end;
  justify-content: flex-end;
  background: #f0f0f0;
  border-right: 1px solid #aaa;
  padding-right: 3px;
}
.colhead span {
  flex: 1;
  min-width: 0;
  font-family: "Liberation Serif", serif;
  font-size: 10px;
  font-weight: bold;
  line-height: 18px;
  text-align: center;
  background: #fafafa;
  border-right: 1px solid #999;
}
.sheet {
  table-layout: fixed;
  width: 687px;
  border-collapse: collapse;
  background: #e8e8e0;
  font-size: 13px;
  line-height: 13px;
}
.w32 { width: 32px; }
.w5 { width: 5px; }
.w6 { width: 6px; }
.w9 { width: 9px; }
.w10 { width: 10px; }
.w11 { width: 11px; }
.w20 { width: 20px; }
.w22 { width: 22px; }
.w30 { width: 30px; }
.w33 { width: 33px; }
.w34 { width: 34px; }
.w44 { width: 44px; }
.w49 { width: 49px; }
.w58 { width: 58px; }
.w80 { width: 80px; }
.w94 { width: 94px; }
.w100 { width: 100px; }
.h5 { height: 5px; }
.h18 { height: 18px; }
.h21 { height: 21px; }
.h22 { height: 22px; }
.h26 { height: 26px; }
.h28 { height: 28px; }
.h30 { height: 30px; }
.h33 { height: 33px; }
.h40 { height: 40px; }
.h44 { height: 44px; }
.h45 { height: 45px; }
.h96 { height: 96px; }
.sheet td, .sheet th {
  padding: 0;
  text-align: center;
  vertical-align: middle;
  overflow: hidden;
}
.rh {
  background: linear-gradient(#fff 2px, #f3f3f3 2px);
  border-bottom: 2px solid #aaa;
  font-family: "Liberation Mono", monospace;
  font-size: 11px;
  font-weight: normal;
  text-align: left !important;
  padding-left: 3px !important;
}
.clip {
  display: block;
  height: 4px;
  line-height: 6px;
  overflow: hidden;
}
.rule {
  background: #e8e8e0;
  border-top: 2px solid #222;
  border-bottom: 3px solid #222;
}
.band {
  background: #e8e8e0;
}
.g { background: #dedede; }
.o { background: #f0c9a6; }
.w { background: #fff; }
.head .g, .head .w {
  border-bottom: 1px solid #cfcfc6;
}
.form td {
  border: 1px solid #000;
}
.form td.lt {
  border-color: #cfcfc6;
  border-right-color: #000;
}
.form td.cell-n {
  border-right: none;
  border-left: none;
}
.form td.slash {
  border-left: none;
  border-right: none;
}
.form td:last-child {
  border-right: 2px solid #000;
}
.form tr:first-child td {
  border-top: 2px solid #000;
}
.form td.btm {
  border-bottom: 3px solid #000;
}
.form td.band {
  border: none;
  border-right: 2px solid #000;
}
.title {
  font-size: 23px;
  font-weight: bold;
  line-height: 26px;
  padding-bottom: 8px !important;
}
.code {
  font-family: "Liberation Mono", monospace;
  font-size: 12px;
}
.left {
  text-align: left !important;
  padding-left: 3px !important;
}
.right {
  text-align: right !important;
  padding-right: 3px !important;
}
.nowrap {
  white-space: nowrap;
}
.vert {
  padding: 0 3px !important;
  line-height: 12px;
}
.date {
  padding-right: 2px !important;
}
.date b {
  display: inline-block;
  width: 14px;
}
```
